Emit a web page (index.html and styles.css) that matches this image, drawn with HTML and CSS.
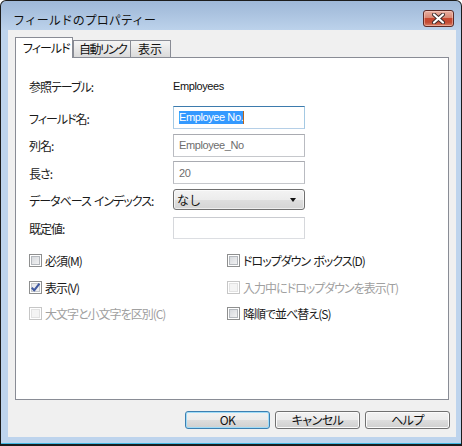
FILE: index.html
```html
<!DOCTYPE html>
<html lang="ja">
<head>
<meta charset="utf-8">
<title>フィールドのプロパティー</title>
<link rel="stylesheet" href="styles.css">
</head>
<body>
<div class="window">
  <div class="titlebar">
    <span class="title">フィールドのプロパティー</span>
    <div class="close">
      <svg width="13" height="11" viewBox="0 0 13 11">
        <path d="M2 1.5 L11 9.5 M11 1.5 L2 9.5" stroke="#3a2a2a" stroke-width="4" stroke-linecap="round" fill="none"/>
        <path d="M2 1.5 L11 9.5 M11 1.5 L2 9.5" stroke="#ffffff" stroke-width="2.2" stroke-linecap="round" fill="none"/>
      </svg>
    </div>
  </div>
  <div class="client">
    <div class="tabs">
      <div class="tab active">フィールド</div>
      <div class="tab t2">自動リンク</div>
      <div class="tab t3">表示</div>
    </div>
    <div class="panel">
      <div class="form">
        <div class="row r0"><span class="label">参照テーブル:</span><span class="value">Employees</span></div>
        <div class="row r1"><span class="label">フィールド名:</span><div class="input focused"><span class="sel">Employee No.</span></div></div>
        <div class="row r2"><span class="label">列名:</span><div class="input ro">Employee_No</div></div>
        <div class="row r3"><span class="label">長さ:</span><div class="input ro">20</div></div>
        <div class="row r4"><span class="label">データベース インデックス:</span><div class="combo"><span class="combo-text">なし</span><span class="arrow"></span></div></div>
        <div class="row r5"><span class="label">既定値:</span><div class="input dis"></div></div>
      </div>
      <div class="checks">
        <div class="check"><span class="cb"></span><span class="cl">必須(M)</span></div>
        <div class="check"><span class="cb"></span><span class="cl">ドロップダウン ボックス(D)</span></div>
        <div class="check"><span class="cb checked"><svg width="11" height="11" viewBox="0 0 11 11"><path d="M1.8 5.6 L4.2 8.4 L9.4 1.6" stroke="#4059a0" stroke-width="2.1" fill="none" stroke-linejoin="round"/></svg></span><span class="cl">表示(V)</span></div>
        <div class="check disabled"><span class="cb"></span><span class="cl">入力中にドロップダウンを表示(T)</span></div>
        <div class="check disabled"><span class="cb"></span><span class="cl">大文字と小文字を区別(C)</span></div>
        <div class="check"><span class="cb"></span><span class="cl">降順で並べ替え(S)</span></div>
      </div>
    </div>
    <div class="buttons">
      <div class="btn default">OK</div>
      <div class="btn">キャンセル</div>
      <div class="btn">ヘルプ</div>
    </div>
  </div>
</div>
</body>
</html>
```
FILE: styles.css
```css
html, body {
  margin: 0;
  padding: 0;
  background: #ffffff;
}
body {
  font-family: "Noto Sans CJK JP", "Liberation Sans", sans-serif;
  font-size: 12px;
  color: #1a1a1a;
}
.window {
  box-sizing: border-box;
  width: 462px;
  height: 446px;
  border: 1px solid #1c1c1c;
  border-bottom-width: 2px;
  border-radius: 6px 6px 0 0;
  padding: 0 5px 7px 7px;
  background: linear-gradient(#9fb8d8 0px, #aac2df 12px, #bcd2eb 29px, #bed4ed 29px, #bed4ed 100%);
  box-shadow: inset 0 -1px 0 #41b7e2;
  display: flex;
  flex-direction: column;
}
.titlebar {
  height: 29px;
  display: flex;
  align-items: flex-start;
  flex-shrink: 0;
}
.title {
  margin-left: 5px;
  margin-top: 11px;
  line-height: 16px;
  font-size: 12px;
  color: #111;
}
.close {
  box-sizing: border-box;
  margin-left: auto;
  margin-right: 2px;
  margin-top: 9px;
  width: 31px;
  height: 17px;
  border: 1px solid #5c2a26;
  border-radius: 3px;
  background: linear-gradient(#e9b0a2 0%, #d98874 45%, #c8472f 50%, #c24a33 75%, #d98167 100%);
  box-shadow: inset 0 0 0 1px rgba(255,220,210,0.45);
  display: flex;
  align-items: center;
  justify-content: center;
}
.close svg { display: block; }
.client {
  flex: 1;
  background: #f0f0f0;
  padding: 7px 7px 0 7px;
  display: flex;
  flex-direction: column;
}
.tabs {
  height: 20px;
  display: flex;
  align-items: flex-end;
  position: relative;
  z-index: 1;
}
.tab {
  box-sizing: border-box;
  height: 17px;
  border: 1px solid #898c95;
  border-bottom: none;
  background: linear-gradient(#f5f5f5, #e8e8e8 50%, #dadada);
  line-height: 15px;
  padding: 0 5px;
  font-feature-settings: "palt";
  letter-spacing: -1px;
  color: #111;
  white-space: nowrap;
  overflow: hidden;
}
.tab.active {
  height: 21px;
  margin-bottom: -1px;
  background: #ffffff;
  width: 58px;
  padding: 2px 0 0 7px;
  line-height: 16px;
}
.tab.t2 {
  width: 58px;
  margin-left: 0;
  padding-left: 5px;
  letter-spacing: -1.6px;
}
.tab.t3 {
  width: 41px;
  margin-left: -1px;
  padding-left: 7px;
  letter-spacing: 0;
}
.panel {
  box-sizing: border-box;
  height: 343px;
  border: 1px solid #898c95;
  background: #ffffff;
  padding: 18px 0 0 13px;
}
.form {
  display: flex;
  flex-direction: column;
}
.row {
  display: flex;
  align-items: center;
}
.r0 { height: 20px; }
.r1 { height: 27px; margin-top: 8px; }
.r2 { height: 28px; }
.r3 { height: 27px; }
.r4 { height: 27px; }
.r5 { height: 29px; }
.label {
  width: 144px;
  flex-shrink: 0;
  font-feature-settings: "palt";
  letter-spacing: -1px;
  word-spacing: 1.5px;
  line-height: 16px;
  padding-top: 2px;
  color: #1a1a1a;
  white-space: pre;
}
.value {
  font-family: "Liberation Sans", sans-serif;
  font-size: 11px;
  letter-spacing: -0.4px;
  color: #111;
}
.input {
  box-sizing: border-box;
  width: 132px;
  height: 23px;
  border: 1px solid #abadb3;
  background: #ffffff;
  padding: 0 0 0 5px;
  display: flex;
  align-items: center;
  font-family: "Liberation Sans", sans-serif;
  font-size: 11px;
  letter-spacing: -0.4px;
  color: #6d6d6d;
}
.input.focused {
  border-color: #3d7bad #a4c9e3 #b5cfe7 #a4c9e3;
}
.input.ro {
  border-color: #a9abb1 #b9bbc1 #c6c8cc #b9bbc1;
}
.input.dis {
  height: 22px;
  border-color: #c9cbd0 #d6d8dc #dcdee2 #d6d8dc;
}
.sel {
  background: #3399ff;
  color: #ffffff;
  line-height: 13px;
  height: 13px;
  border-right: 1px solid #b8641c;
}
.combo {
  box-sizing: border-box;
  width: 132px;
  height: 21px;
  border: 1px solid #707070;
  border-radius: 3px;
  background: linear-gradient(#f3f3f3 0%, #ececec 50%, #dedede 51%, #d4d4d4 100%);
  box-shadow: inset 0 0 0 1px rgba(255,255,255,0.6);
  display: flex;
  align-items: center;
  padding: 0 8px 0 3px;
}
.combo-text {
  line-height: 16px;
  padding-top: 1px;
  color: #111;
}
.arrow {
  margin-left: auto;
  width: 0;
  height: 0;
  border-left: 3.5px solid transparent;
  border-right: 3.5px solid transparent;
  border-top: 4px solid #111;
}
.checks {
  margin-top: 5px;
  display: grid;
  grid-template-columns: 198px auto;
  grid-template-rows: 27px 26px 26px;
  align-items: center;
}
.check {
  display: flex;
  align-items: center;
}
.cb {
  box-sizing: border-box;
  width: 13px;
  height: 13px;
  flex-shrink: 0;
  border: 1px solid #8e8f8f;
  background: linear-gradient(135deg, #cfd3d8 0%, #e8e9eb 60%, #f7f7f7 100%);
  box-shadow: inset 0 0 0 1px #ffffff, inset 0 0 0 2px #b4b8bd;
  display: flex;
  align-items: center;
  justify-content: center;
}
.cb.checked {
  background: linear-gradient(135deg, #e3e5e8 0%, #f4f4f5 100%);
  box-shadow: inset 0 0 0 1px #ffffff, inset 0 0 0 2px #c4c7cb;
}
.cb svg { display: block; }
.cl {
  margin-left: 3px;
  font-feature-settings: "palt";
  letter-spacing: -1px;
  word-spacing: 1.5px;
  line-height: 16px;
  padding-top: 1px;
  color: #1a1a1a;
  white-space: pre;
}
.check.disabled .cb {
  border-color: #c6c6c6;
  background: #f4f4f4;
  box-shadow: inset 0 0 0 1px #ffffff, inset 0 0 0 2px #e2e2e2;
}
.check.disabled .cl {
  color: #a0a0a0;
}
.buttons {
  margin-top: 11px;
  margin-right: -1px;
  display: flex;
  justify-content: flex-end;
  gap: 5px;
}
.btn {
  box-sizing: border-box;
  width: 85px;
  height: 18px;
  border: 1px solid #707070;
  border-radius: 3px;
  background: linear-gradient(#f2f2f2 0%, #ebebeb 50%, #dddddd 51%, #cfcfcf 100%);
  box-shadow: inset 0 0 0 1px #fbfbfb;
  text-align: center;
  line-height: 15px;
  font-feature-settings: "palt";
  letter-spacing: -0.5px;
  color: #111;
}
.btn.default {
  border-color: #3c7fb1;
  box-shadow: inset 0 0 0 1px #9fdcf8;
}
```
